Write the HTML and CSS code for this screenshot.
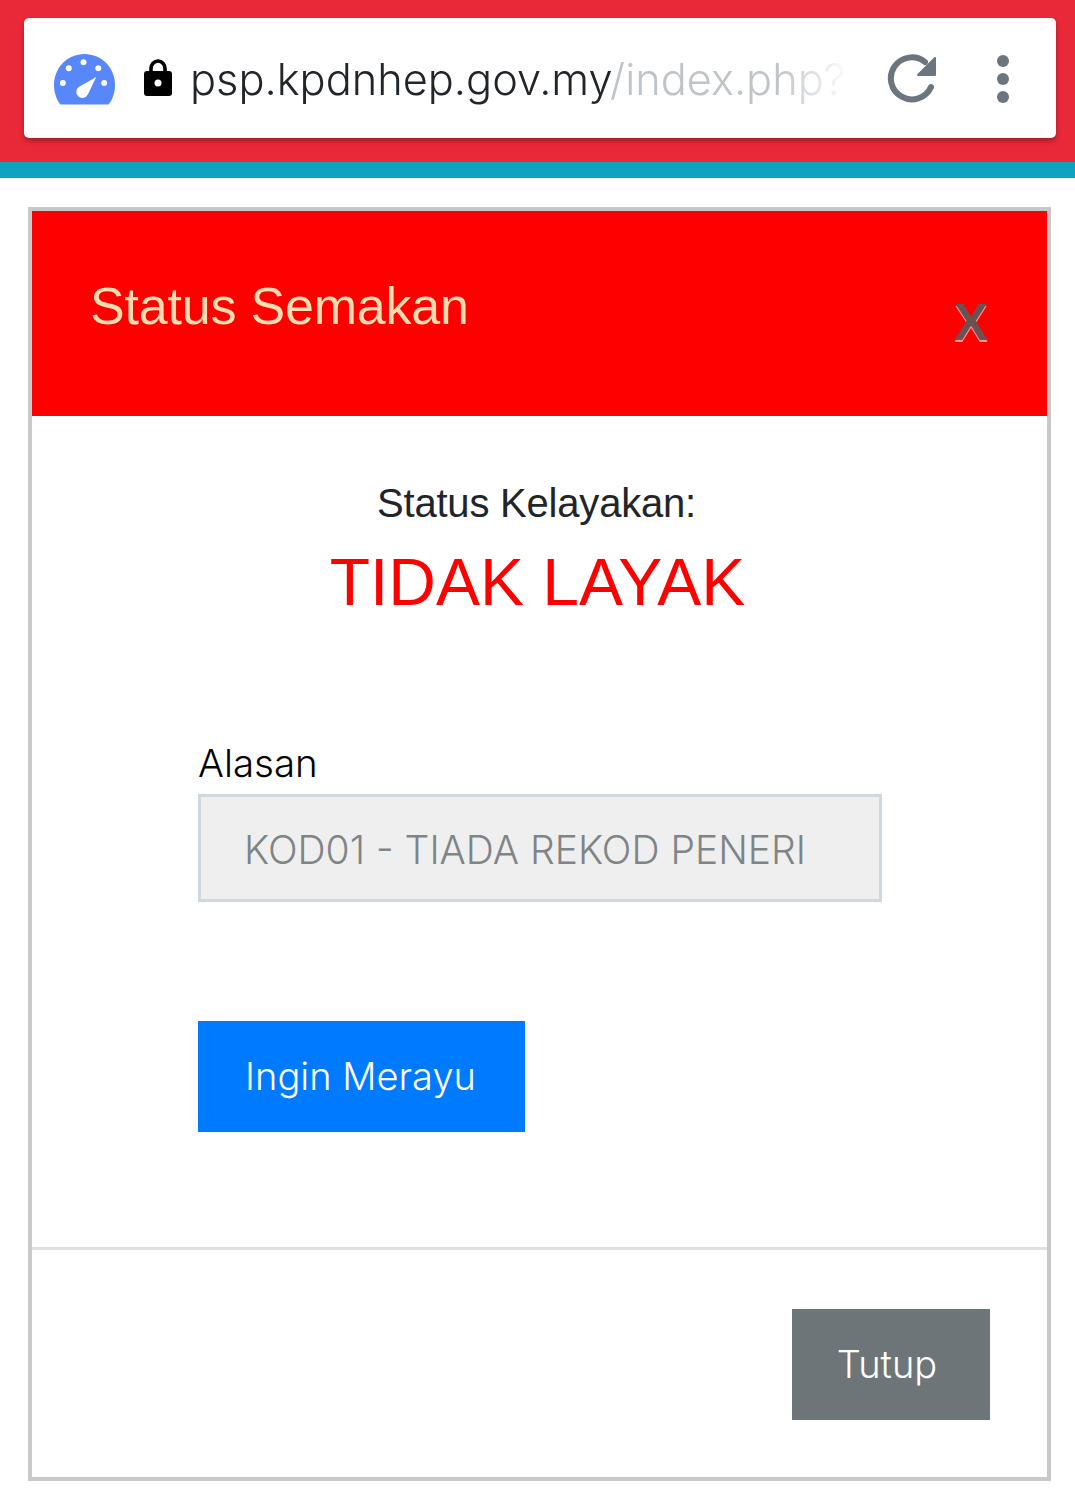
FILE: index.html
```html
<!DOCTYPE html>
<html lang="en">
<head>
    <meta charset="UTF-8">
    <meta name="viewport" content="width=device-width, initial-scale=1.0">
    <title>Status Semakan</title>
    <link rel="stylesheet" href="styles.css">
</head>
<body>
    <!-- Browser toolbar -->
    <div class="toolbar">
        <div class="address-bar">
            <svg class="gauge" width="61" height="53" viewBox="0 0 62 53">
                <path fill="#5787fb" d="M6.5 52C2.5 46.500 0 40 0 32 0 14.500 13.500 0.500 31 0.500S62 14.500 62 32c0 8-2.500 14.500-6.500 20z"/>
                <circle cx="30" cy="9" r="3" fill="#fff"/>
                <circle cx="15" cy="15" r="3" fill="#fff"/>
                <circle cx="45" cy="15" r="3" fill="#fff"/>
                <circle cx="9" cy="30" r="3" fill="#fff"/>
                <circle cx="51" cy="30" r="3" fill="#fff"/>
                <path fill="#fff" d="M43 24 34.500 41.500A6.200 6.200 0 1 1 26 33.500z"/>
            </svg>
            <svg class="lock" width="28" height="37" viewBox="0 0 28 37">
                <path fill="none" stroke="#000" stroke-width="3.600" d="M7 13V9.500a7 7.500 0 0 1 14 0V13"/>
                <rect x="0" y="12" width="28" height="25" rx="3" fill="#000"/>
                <circle cx="14" cy="24" r="3.500" fill="#fff"/>
            </svg>
            <div class="url"><span class="url-host">psp.kpdnhep.gov.my</span><span class="url-path">/index.php?</span></div>
            <svg class="reload" width="50" height="50" viewBox="0 0 50 50">
                <path fill="none" stroke="#6c757d" stroke-width="6" stroke-linecap="round" d="M44 34A21 21 0 1 1 38 9"/>
                <path fill="#6c757d" stroke="#6c757d" stroke-width="2" stroke-linejoin="round" d="M48 5V22H31z"/>
            </svg>
            <div class="menu-dots">
                <span class="dot"></span>
                <span class="dot"></span>
                <span class="dot"></span>
            </div>
        </div>
    </div>
    <div class="teal-strip"></div>

    <!-- Modal -->
    <div class="modal">
        <div class="modal-header">
            <h5 class="modal-title">Status Semakan</h5>
            <span class="close-x">X</span>
        </div>
        <div class="modal-body">
            <div class="status-label">Status Kelayakan:</div>
            <div class="status-value">TIDAK LAYAK</div>
            <label class="field-label" for="alasan">Alasan</label>
            <input class="field-input" id="alasan" type="text" value="KOD01 - TIADA REKOD PENERIMA" disabled>
            <button class="btn btn-appeal" type="button">Ingin Merayu</button>
        </div>
        <div class="modal-footer">
            <button class="btn btn-close" type="button">Tutup</button>
        </div>
    </div>
</body>
</html>
```

FILE: styles.css
```css
html, body {
    margin: 0;
    padding: 0;
}
body {
    width: 1075px;
    height: 1503px;
    overflow: hidden;
    background: #fff;
    font-family: "Liberation Sans", Arial, sans-serif;
}

/* toolbar */
.toolbar {
    height: 162px;
    box-sizing: border-box;
    padding: 18px 19px 0 24px;
    background: #e92838;
}
.address-bar {
    display: flex;
    align-items: center;
    height: 120px;
    box-sizing: border-box;
    padding-left: 30px;
    background: #fff;
    border-radius: 5px;
    box-shadow: 0 3px 5px rgba(0, 0, 0, 0.3);
}
.gauge {
    flex: none;
    margin-top: 2px;
}
.lock {
    flex: none;
    margin: -2px 0 0 29px;
}
.url {
    width: 668px;
    margin: 2px 0 0 18px;
    overflow: hidden;
    white-space: nowrap;
    font-family: Inter, sans-serif;
    font-weight: 300;
    font-size: 43.3px;
    line-height: 60px;
    -webkit-mask-image: linear-gradient(to right, #000 88%, transparent 99%);
}
.url-host {
    color: #212529;
}
.url-path {
    color: #bfc4c8;
}
.reload {
    flex: none;
    margin-left: 29px;
}
.menu-dots {
    display: flex;
    flex-direction: column;
    gap: 6px;
    margin: 2px 0 0 60px;
}
.dot {
    width: 12px;
    height: 12px;
    border-radius: 50%;
    background: #6c757d;
}
.teal-strip {
    height: 16px;
    background: #11a2bf;
}

/* modal */
.modal {
    display: flex;
    flex-direction: column;
    width: 1023px;
    height: 1274px;
    box-sizing: border-box;
    margin: 29px 0 0 28px;
    border: 4px solid #c6c9c7;
}
.modal-header {
    display: flex;
    justify-content: space-between;
    height: 205px;
    box-sizing: border-box;
    padding: 62px 59px 0 58px;
    background: #f00;
}
.modal-title {
    margin: 0;
    font-weight: 400;
    font-size: 52px;
    line-height: 66px;
    letter-spacing: -0.2px;
    color: #f8dcb0;
}
.close-x {
    margin-top: 21px;
    font-weight: 700;
    font-size: 51px;
    line-height: 58px;
    color: #6a5252;
    text-shadow: 0 2px 0 #ff9a9a;
}
.modal-body {
    display: flex;
    flex-direction: column;
    align-items: flex-start;
    height: 831px;
    box-sizing: border-box;
    padding: 60px 166px 0;
}
.status-label {
    align-self: center;
    margin-right: 6px;
    font-size: 40px;
    line-height: 54px;
    letter-spacing: -0.2px;
    color: #212529;
}
.status-value {
    align-self: center;
    margin: 10px 4px 0 0;
    font-size: 66px;
    line-height: 84px;
    letter-spacing: 0;
    color: #f00;
}
.field-label {
    margin-top: 112px;
    font-family: Inter, sans-serif;
    font-weight: 300;
    font-size: 38.5px;
    line-height: 54px;
    color: #000;
}
.field-input {
    width: 684px;
    height: 108px;
    box-sizing: border-box;
    margin: 4px 0 119px;
    padding: 2px 70px 0 43px;
    border: 3px solid #d0d8df;
    background: #efefef;
    font-family: Inter, sans-serif;
    font-weight: 300;
    font-size: 39px;
    color: #7f8486;
    opacity: 1;
}
.btn {
    height: 111px;
    box-sizing: border-box;
    border: 0;
    border-radius: 0;
    font-family: Inter, sans-serif;
    font-weight: 300;
    font-size: 38px;
    color: #fff;
}
.btn-appeal {
    width: 327px;
    padding: 0 2px 1px 0;
    background: #007bff;
}
.modal-footer {
    display: flex;
    justify-content: flex-end;
    flex: 1;
    padding: 59px 57px 0 0;
    border-top: 3px solid #dee2e6;
}
.btn-close {
    width: 198px;
    padding: 0 8px 1px 0;
    background: #6e7579;
}
```
